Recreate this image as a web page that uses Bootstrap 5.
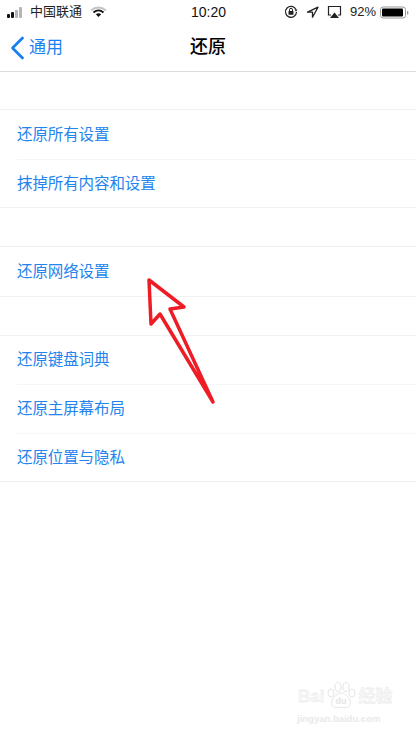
<!DOCTYPE html>
<html lang="zh-CN">
<head>
    <meta charset="UTF-8">
    <meta name="viewport" content="width=device-width, initial-scale=1.0">
    <link href="https://cdn.jsdelivr.net/npm/bootstrap@5.3.0/dist/css/bootstrap.min.css" rel="stylesheet">
    <title>还原</title>
    <style>
        html, body {
            height: 738px;
            overflow: hidden;
        }

        body {
            background-color: #fff;
            font-family: "Liberation Sans", "Noto Sans CJK SC", sans-serif;
            color: #000;
        }

        .screen {
            position: relative;
            width: 416px;
            height: 738px;
            overflow: hidden;
        }

        .status-bar {
            height: 24px;
            font-size: 13px;
            padding: 0 6px 0 7px;
            color: #222;
        }

        .status-side {
            width: 170px;
        }

        .status-clock {
            font-size: 14px;
            font-weight: 500;
            color: #111;
        }

        .signal-dots {
            gap: 1px;
            margin-right: 4px;
        }

        .signal-dots i {
            display: block;
            width: 3px;
            border-radius: 1px;
            background: #111;
        }

        .signal-dots i.off {
            background: #b5b5b5;
        }

        .nav-head {
            height: 48px;
            border-bottom: 1px solid #dcdcdf;
        }

        .back-link {
            position: absolute;
            left: 10px;
            top: 35px;
            color: #1a7ff0;
            font-size: 17px;
            gap: 4px;
            text-decoration: none;
        }

        .nav-title {
            font-size: 18px;
            font-weight: 500;
        }

        .gap-band {
            height: 37px;
        }

        .gap-band.tall {
            height: 38px;
        }

        .settings-group {
            border-top: 1px solid #f1f1f4;
            border-bottom: 1px solid #f1f1f4;
        }

        .settings-row {
            height: 48.5px;
            margin-left: 17px;
            color: #2384ee;
            font-size: 15.5px;
            letter-spacing: -0.1px;
        }

        .settings-row + .settings-row {
            border-top: 1px solid #f6f6f8;
        }

        .arrow-mark {
            position: absolute;
            left: 140px;
            top: 272px;
        }

        .watermark {
            position: absolute;
            left: 298px;
            top: 682px;
            width: 112px;
            color: #e9e9e9;
            line-height: 1;
        }

        .watermark-brand {
            font-size: 17px;
            font-weight: 700;
            gap: 2px;
            -webkit-text-stroke: 0.3px #e2e2e2;
            color: #f8f8f8;
        }

        .watermark-url {
            font-size: 9.5px;
            margin-top: 4px;
            margin-left: -1px;
            font-weight: 700;
        }
    </style>
</head>
<body>

<div class="screen">
    <div class="status-bar d-flex align-items-center justify-content-between">
        <div class="status-side d-flex align-items-center">
            <span class="signal-dots d-flex align-items-end">
                <i style="height:4px"></i><i style="height:6px"></i><i class="off" style="height:8px"></i><i class="off" style="height:11px"></i>
            </span>
            <span class="ms-1">中国联通</span>
            <svg class="ms-2" width="17" height="12" viewBox="0 0 17 12">
                <path d="M1 4.5C5.5.5 11.500.5 16 4.500" fill="none" stroke="#c4c4c4" stroke-width="1.800"/>
                <path d="M3.500 6.500C6.500 4 10.500 4 13.500 6.500" fill="none" stroke="#111" stroke-width="1.800"/>
                <path d="M5.800 8.300C7.500 7 9.500 7 11.200 8.300L8.500 11z" fill="#111"/>
            </svg>
        </div>
        <div class="status-clock">10:20</div>
        <div class="status-side d-flex align-items-center justify-content-end">
            <svg width="14" height="14" viewBox="0 0 14 14" class="me-2">
                <path d="M12 4.500A5.500 5.500 0 1 0 12.500 7" fill="none" stroke="#222" stroke-width="1.200"/>
                <path d="M10.500 4.500h3l-1.500 2.200z" fill="#222"/>
                <rect x="4.500" y="6" width="5" height="3.800" rx=".5" fill="#222"/>
                <path d="M5.500 6V4.800a1.500 1.500 0 0 1 3 0V6" fill="none" stroke="#222"/>
            </svg>
            <svg width="13" height="13" viewBox="0 0 13 13" class="me-2">
                <path d="M12 1.200 1.500 6.200h5v5z" fill="none" stroke="#222" stroke-width="1.300" stroke-linejoin="round"/>
            </svg>
            <svg width="15" height="14" viewBox="0 0 15 14" class="me-1">
                <path d="M4 10H1.500V1.500h12V10H11" fill="none" stroke="#222" stroke-width="1.200"/>
                <path d="M7.500 7.500 12 13H3z" fill="#222"/>
            </svg>
            <span class="ms-1">92%</span>
            <svg width="30" height="13" viewBox="0 0 30 13" class="ms-1">
                <rect x=".5" y="1" width="25" height="11" rx="2.500" fill="none" stroke="#999"/>
                <rect x="2" y="2.500" width="21" height="8" rx="1" fill="#000"/>
                <rect x="27" y="5" width="1.300" height="3.500" rx=".6" fill="#999"/>
            </svg>
        </div>
    </div>

    <div class="nav-head d-flex align-items-center justify-content-center">
        <span class="nav-title">还原</span>
    </div>
    <a class="back-link d-flex align-items-center" href="#">
        <svg width="15" height="24" viewBox="0 0 15 24">
            <path d="M12.500 2 2.500 12l10 10" fill="none" stroke="#1a7ff0" stroke-width="2.800" stroke-linecap="round" stroke-linejoin="round"/>
        </svg>
        <span>通用</span>
    </a>

    <div class="gap-band"></div>
    <div class="settings-group">
        <div class="settings-row d-flex align-items-center">还原所有设置</div>
        <div class="settings-row d-flex align-items-center">抹掉所有内容和设置</div>
    </div>
    <div class="gap-band tall"></div>
    <div class="settings-group">
        <div class="settings-row d-flex align-items-center">还原网络设置</div>
    </div>
    <div class="gap-band tall"></div>
    <div class="settings-group">
        <div class="settings-row d-flex align-items-center">还原键盘词典</div>
        <div class="settings-row d-flex align-items-center">还原主屏幕布局</div>
        <div class="settings-row d-flex align-items-center">还原位置与隐私</div>
    </div>

    <svg class="arrow-mark" width="80" height="140" viewBox="140 272 80 140">
        <path d="M149 280 184 307 170 309 213 402 160 314 151 324z" fill="none" stroke="#ee1c25" stroke-width="3.500" stroke-linejoin="round" stroke-linecap="round"/>
    </svg>

    <div class="watermark">
        <div class="watermark-brand d-flex align-items-center">
            <span>Bai</span>
            <svg width="30" height="28" viewBox="0 0 30 28">
                <g fill="#fff" stroke="#e6e6e6">
                    <ellipse cx="5" cy="11" rx="3" ry="4"/>
                    <ellipse cx="12" cy="5" rx="3" ry="4.500"/>
                    <ellipse cx="20" cy="5" rx="3" ry="4.500"/>
                    <ellipse cx="26" cy="11" rx="3" ry="4"/>
                    <path d="M15 11c5 0 11 7 9 12-1 3-5 3-9 2-4 1-8 1-9-2-2-5 4-12 9-12z"/>
                </g>
                <text x="15" y="22" font-size="9" font-weight="700" text-anchor="middle" fill="#e4e4e4" stroke="none">du</text>
            </svg>
            <span class="watermark-cn">经验</span>
        </div>
        <div class="watermark-url">jingyan.baidu.com</div>
    </div>
</div>

<script src="https://cdn.jsdelivr.net/npm/bootstrap@5.3.0/dist/js/bootstrap.bundle.min.js"></script>
</body>
</html>
